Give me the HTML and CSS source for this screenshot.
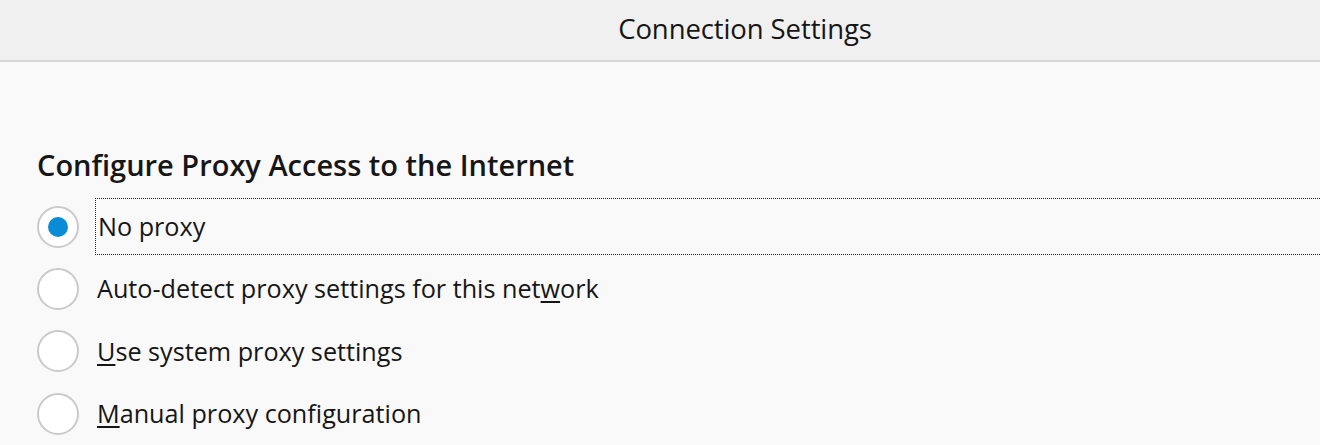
FILE: index.html
```html
<!DOCTYPE html>
<html lang="en">
<head>
  <meta charset="UTF-8" />
  <title>Connection Settings</title>
  <link rel="stylesheet" href="styles.css">
</head>
<body>
  <div class="titlebar">
    <h1>Connection Settings</h1>
  </div>
  <div class="conteudo">
    <h2>Configure Proxy Access to the Internet</h2>
    <div class="opcoes">
      <label class="opcao">
        <span class="radio marcado"></span>
        <span class="texto foco">No proxy</span>
      </label>
      <label class="opcao">
        <span class="radio"></span>
        <span class="texto">Auto-detect proxy settings for this net<u>w</u>ork</span>
      </label>
      <label class="opcao">
        <span class="radio"></span>
        <span class="texto"><u>U</u>se system proxy settings</span>
      </label>
      <label class="opcao">
        <span class="radio"></span>
        <span class="texto"><u>M</u>anual proxy configuration</span>
      </label>
    </div>
  </div>
</body>
</html>
```

FILE: styles.css
```css
* {
  box-sizing: border-box;
}
body {
  font-family: "Open Sans", "Noto Sans", sans-serif;
  margin: 0;
  padding: 0;
  background: #f9f9f9;
  color: #161616;
  overflow: hidden;
}
.titlebar {
  height: 62px;
  background: #f0f0f0;
  border-bottom: 2px solid #d6d6d6;
  display: flex;
  align-items: center;
  justify-content: center;
  padding-left: 170px;
}
.titlebar h1 {
  margin: 0 0 3px;
  font-size: 27.5px;
  font-weight: 400;
  letter-spacing: -0.1px;
}
.conteudo {
  padding: 85px 0 0 37px;
}
.conteudo h2 {
  margin: 0 0 16px;
  font-size: 29px;
  font-weight: 600;
  line-height: 36px;
}
.opcoes {
  display: flex;
  flex-direction: column;
  gap: 7.4px;
}
.opcao {
  display: flex;
  align-items: center;
  gap: 16px;
  height: 55px;
}
.radio {
  width: 42px;
  height: 42px;
  border: 2px solid #cacaca;
  border-radius: 50%;
  background: #fff;
  display: flex;
  align-items: center;
  justify-content: center;
  flex-shrink: 0;
}
.radio.marcado::after {
  content: "";
  width: 20px;
  height: 20px;
  border-radius: 50%;
  background: #0a8bd8;
}
.texto {
  font-size: 25.2px;
  line-height: 55px;
  padding-left: 2px;
}
.texto u {
  text-underline-offset: 3px;
}
.foco {
  flex: 1;
  margin-right: -40px;
  border: 1px dotted #222;
}
```
